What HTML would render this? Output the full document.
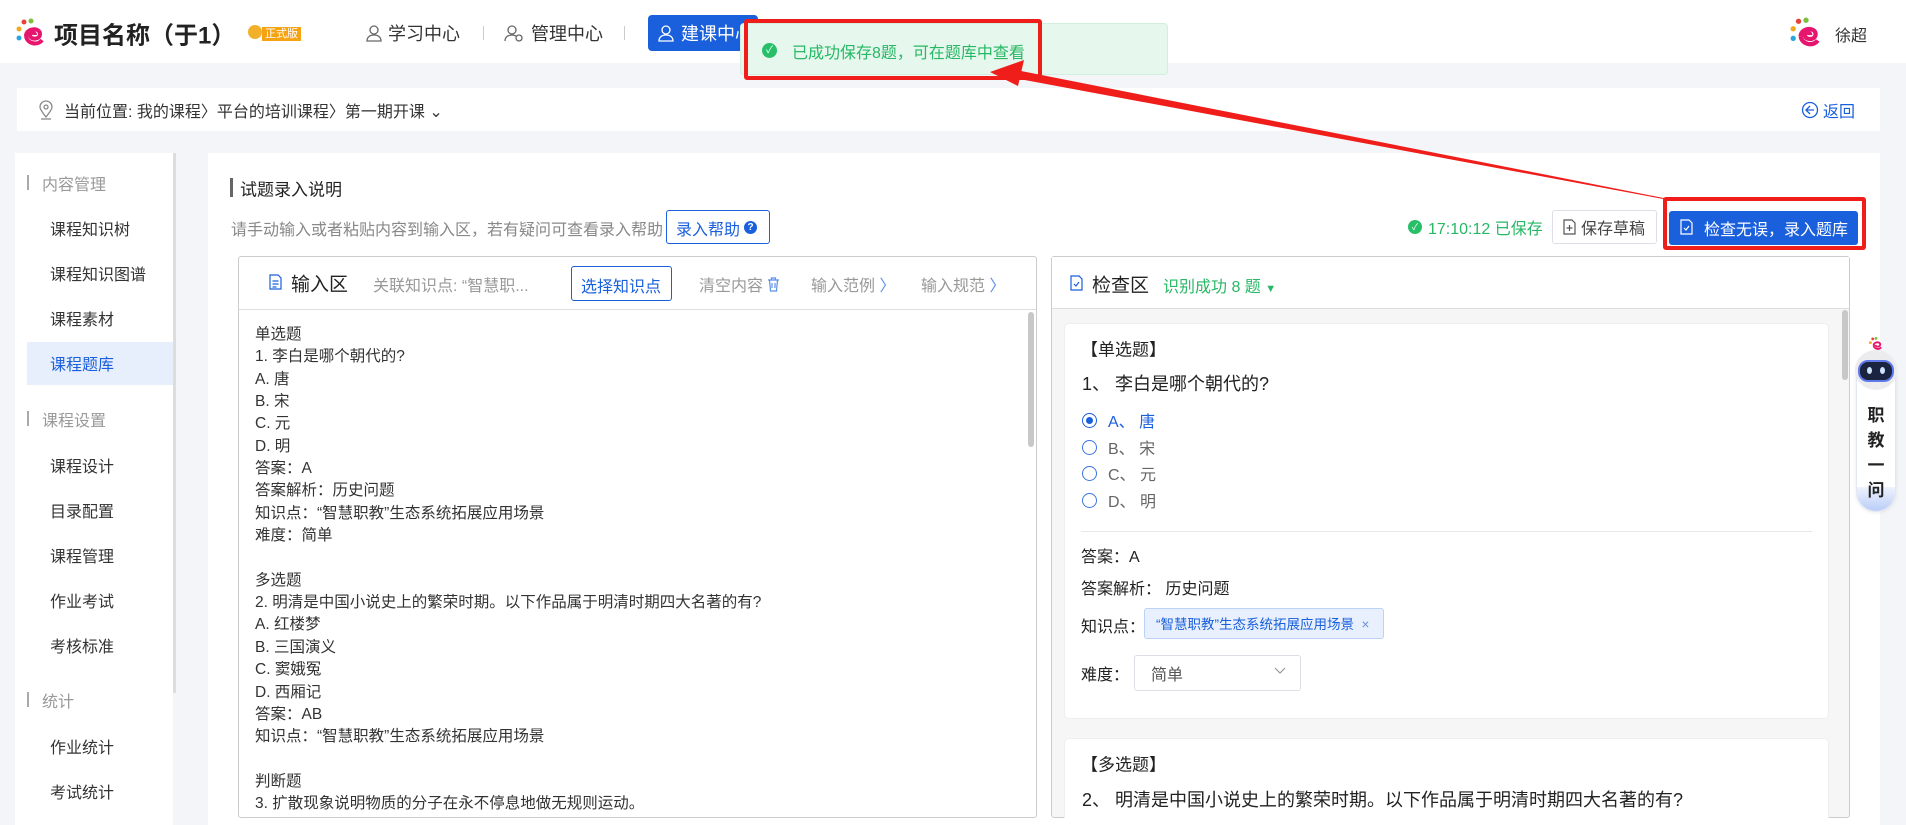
<!DOCTYPE html>
<html><head><meta charset="utf-8"><style>
*{margin:0;padding:0;box-sizing:border-box}
body{width:1906px;height:825px;overflow:hidden;background:#f4f5f8;font-family:"Liberation Sans","Noto Sans CJK SC",sans-serif;color:#333;position:relative}
.a{position:absolute;white-space:nowrap}
.vc{transform:translateY(-50%)}
</style></head><body>
<!-- header -->
<div class="a" style="left:0;top:0;width:1906px;height:63px;background:#fff"></div>
<svg class="a" style="left:16px;top:18px" width="30" height="30" viewBox="0 0 30 30"><circle cx="8" cy="4" r="2.5" fill="#e8413b"/><circle cx="15" cy="3" r="2.5" fill="#7bbf3a"/><circle cx="3" cy="11" r="2.5" fill="#f2a81e"/><circle cx="3" cy="20" r="2.5" fill="#2aa7df"/><path d="M10 18 C10 10 24 9 24 16 C24 22 14 22 14 17 C14 14 19 14 19 17" fill="none" stroke="#e6156d" stroke-width="4"/><path d="M10 18 C11 26 22 28 26 22" fill="none" stroke="#e6156d" stroke-width="4"/></svg>
<div class="a vc" style="left:54px;top:33px;font-size:24px;font-weight:bold;color:#222">项目名称（于1）</div>
<div class="a" style="left:248px;top:25px;width:14px;height:14px;border-radius:50%;background:#f3b12b"></div>
<div class="a" style="left:262px;top:27px;height:14px;padding:0 3px;background:#f6a313;color:#fff;font-size:11px;line-height:14px">正式版</div>
<svg class="a" style="left:365px;top:24px" width="18" height="18" viewBox="0 0 18 18" fill="none" stroke="#666" stroke-width="1.3"><circle cx="9" cy="6" r="4"/><path d="M2 17c0-4 3-6 7-6s7 2 7 6z"/></svg>
<div class="a vc" style="left:388px;top:33px;font-size:18px;color:#333">学习中心</div>
<div class="a" style="left:483px;top:26px;width:1px;height:14px;background:#ccc"></div>
<svg class="a" style="left:504px;top:24px" width="20" height="18" viewBox="0 0 20 18" fill="none" stroke="#666" stroke-width="1.3"><circle cx="8" cy="6" r="4"/><path d="M1 17c0-4 3-6 7-6 2 0 3 .5 4 1"/><circle cx="15" cy="14" r="3"/></svg>
<div class="a vc" style="left:531px;top:33px;font-size:18px;color:#333">管理中心</div>
<div class="a" style="left:624px;top:26px;width:1px;height:14px;background:#ccc"></div>
<div class="a" style="left:648px;top:15px;width:110px;height:36px;background:#1a5fdc;border-radius:4px"></div>
<svg class="a" style="left:658px;top:24px" width="18" height="18" viewBox="0 0 18 18" fill="none" stroke="#fff" stroke-width="1.3"><circle cx="8" cy="6" r="4"/><path d="M1 17c0-4 3-6 7-6s7 2 7 6z"/></svg>
<div class="a vc" style="left:681px;top:33px;font-size:18px;color:#fff">建课中心</div>
<!-- toast -->
<div class="a" style="left:740px;top:23px;width:428px;height:52px;background:#e6f7ed;border:1px solid #d2efdd;border-radius:4px"></div>
<div class="a" style="left:762px;top:43px;width:15px;height:15px;border-radius:50%;background:#27c069;color:#fff;font-size:10px;line-height:15px;text-align:center">✓</div>
<div class="a vc" style="left:792px;top:51px;font-size:16px;color:#27b865">已成功保存8题，可在题库中查看</div>
<div class="a" style="left:744px;top:19px;width:298px;height:61px;border:4px solid #f01e1a;border-radius:3px"></div>
<!-- user -->
<svg class="a" style="left:1790px;top:17px" width="32" height="32" viewBox="0 0 30 30"><circle cx="8" cy="4" r="2.5" fill="#e8413b"/><circle cx="15" cy="3" r="2.5" fill="#7bbf3a"/><circle cx="3" cy="11" r="2.5" fill="#f2a81e"/><circle cx="3" cy="20" r="2.5" fill="#2aa7df"/><path d="M10 18 C10 10 24 9 24 16 C24 22 14 22 14 17 C14 14 19 14 19 17" fill="none" stroke="#e6156d" stroke-width="4"/><path d="M10 18 C11 26 22 28 26 22" fill="none" stroke="#e6156d" stroke-width="4"/></svg>
<div class="a vc" style="left:1835px;top:34px;font-size:16px;color:#333">徐超</div>
<!-- breadcrumb -->
<div class="a" style="left:17px;top:88px;width:1863px;height:43px;background:#fff"></div>
<svg class="a" style="left:38px;top:100px" width="16" height="20" viewBox="0 0 16 20" fill="none" stroke="#888" stroke-width="1.3"><path d="M8 17C4 12 2 9 2 7a6 6 0 0 1 12 0c0 2-2 5-6 10z"/><circle cx="8" cy="7" r="2"/><path d="M3 19h10"/></svg>
<div class="a vc" style="left:64px;top:110px;font-size:16px;color:#333">当前位置:&nbsp;我的课程〉平台的培训课程〉第一期开课 ⌄</div>
<svg class="a" style="left:1801px;top:101px" width="18" height="18" viewBox="0 0 18 18" fill="none" stroke="#1a5fdc" stroke-width="1.3"><circle cx="9" cy="9" r="7.5"/><path d="M9 5 5 9l4 4M5 9h8"/></svg>
<div class="a vc" style="left:1823px;top:110px;font-size:16px;color:#1a5fdc">返回</div>
<!-- sidebar -->
<div class="a" style="left:15px;top:153px;width:158px;height:672px;background:#fff"></div>
<div class="a" style="left:173px;top:153px;width:3px;height:540px;background:#ddd"></div>
<div class="a" style="left:27px;top:175px;width:2px;height:15px;background:#aaa"></div>
<div class="a vc" style="left:42px;top:183px;font-size:16px;color:#999">内容管理</div>
<div class="a vc" style="left:50px;top:228px;font-size:16px">课程知识树</div>
<div class="a vc" style="left:50px;top:273px;font-size:16px">课程知识图谱</div>
<div class="a vc" style="left:50px;top:318px;font-size:16px">课程素材</div>
<div class="a" style="left:27px;top:342px;width:146px;height:43px;background:#e8effc"></div>
<div class="a vc" style="left:50px;top:363px;font-size:16px;color:#1a5fdc">课程题库</div>
<div class="a" style="left:27px;top:411px;width:2px;height:15px;background:#aaa"></div>
<div class="a vc" style="left:42px;top:419px;font-size:16px;color:#999">课程设置</div>
<div class="a vc" style="left:50px;top:465px;font-size:16px">课程设计</div>
<div class="a vc" style="left:50px;top:510px;font-size:16px">目录配置</div>
<div class="a vc" style="left:50px;top:555px;font-size:16px">课程管理</div>
<div class="a vc" style="left:50px;top:600px;font-size:16px">作业考试</div>
<div class="a vc" style="left:50px;top:645px;font-size:16px">考核标准</div>
<div class="a" style="left:27px;top:692px;width:2px;height:15px;background:#aaa"></div>
<div class="a vc" style="left:42px;top:700px;font-size:16px;color:#999">统计</div>
<div class="a vc" style="left:50px;top:746px;font-size:16px">作业统计</div>
<div class="a vc" style="left:50px;top:791px;font-size:16px">考试统计</div>
<!-- main card -->
<div class="a" style="left:208px;top:153px;width:1672px;height:672px;background:#fff"></div>
<div class="a" style="left:230px;top:178px;width:3px;height:19px;background:#666"></div>
<div class="a vc" style="left:240px;top:188px;font-size:17px;color:#222">试题录入说明</div>
<div class="a vc" style="left:231px;top:228px;font-size:16px;color:#888">请手动输入或者粘贴内容到输入区，若有疑问可查看录入帮助</div>
<div class="a" style="left:666px;top:210px;width:104px;height:34px;border:1px solid #1a5fdc;border-radius:3px"></div>
<div class="a vc" style="left:676px;top:228px;font-size:16px;color:#1a5fdc">录入帮助</div>
<div class="a" style="left:744px;top:221px;width:13px;height:13px;border-radius:50%;background:#1a5fdc;color:#fff;font-size:10px;line-height:13px;text-align:center;font-weight:bold">?</div>
<div class="a" style="left:1408px;top:220px;width:14px;height:14px;border-radius:50%;background:#27c069;color:#fff;font-size:9px;line-height:14px;text-align:center">✓</div>
<div class="a vc" style="left:1428px;top:227px;font-size:16px;color:#27b865">17:10:12 已保存</div>
<div class="a" style="left:1552px;top:210px;width:105px;height:34px;border:1px solid #dcdfe6;border-radius:3px"></div>
<svg class="a" style="left:1563px;top:219px" width="13" height="16" viewBox="0 0 13 16" fill="none" stroke="#555" stroke-width="1.2"><path d="M1 1h8l3 3v11H1z"/><path d="M6.5 6v6M3.5 9h6"/></svg>
<div class="a vc" style="left:1581px;top:227px;font-size:16px;color:#444">保存草稿</div>
<div class="a" style="left:1669px;top:211px;width:189px;height:34px;background:#1a5fdc;border-radius:3px"></div>
<svg class="a" style="left:1680px;top:219px" width="13" height="16" viewBox="0 0 13 16" fill="none" stroke="#fff" stroke-width="1.2"><path d="M1 1h8l3 3v11H1z"/><path d="M4 9l2 2 3-4"/></svg>
<div class="a vc" style="left:1704px;top:228px;font-size:16px;color:#fff">检查无误，录入题库</div>
<div class="a" style="left:1663px;top:197px;width:203px;height:53px;border:4px solid #f01e1a;border-radius:3px"></div>
<!-- arrow -->
<svg class="a" style="left:0;top:0" width="1906" height="825"><polygon points="1666,199.5 1666,198.5 1016,70 1014,78" fill="#f01e1a"/><polygon points="990,72 1024,60 1018,86" fill="#f01e1a"/></svg>
<!-- left panel -->
<div class="a" style="left:238px;top:256px;width:799px;height:562px;border:1px solid #ccc;border-radius:3px"></div>
<div class="a" style="left:239px;top:309px;width:797px;height:1px;background:#ddd"></div>
<svg class="a" style="left:269px;top:274px" width="13" height="16" viewBox="0 0 13 16" fill="none" stroke="#1a5fdc" stroke-width="1.2"><path d="M1 1h8l3 3v11H1z"/><path d="M3.5 7h6M3.5 10h6M3.5 13h4"/></svg>
<div class="a vc" style="left:291px;top:283px;font-size:19px;color:#222">输入区</div>
<div class="a vc" style="left:373px;top:284px;font-size:16px;color:#999">关联知识点: “智慧职...</div>
<div class="a" style="left:571px;top:266px;width:101px;height:35px;border:1px solid #1a5fdc;border-radius:3px"></div>
<div class="a vc" style="left:581px;top:285px;font-size:16px;color:#1a5fdc">选择知识点</div>
<div class="a vc" style="left:699px;top:284px;font-size:16px;color:#999">清空内容</div>
<svg class="a" style="left:767px;top:277px" width="13" height="15" viewBox="0 0 13 15" fill="none" stroke="#5b8ee6" stroke-width="1.2"><path d="M1 3h11M4.5 3V1h4v2M2.5 3l1 11h6l1-11M5 6v5M8 6v5"/></svg>
<div class="a vc" style="left:811px;top:284px;font-size:16px;color:#999">输入范例 <span style="color:#5b8ee6">〉</span></div>
<div class="a vc" style="left:921px;top:284px;font-size:16px;color:#999">输入规范 <span style="color:#5b8ee6">〉</span></div>
<div class="a" style="left:1028px;top:312px;width:6px;height:135px;background:#c8c8c8;border-radius:3px"></div>
<div class="a" style="left:255px;top:324px;font-size:15.5px;line-height:22.35px;color:#333">单选题<br>1. 李白是哪个朝代的?<br>A. 唐<br>B. 宋<br>C. 元<br>D. 明<br>答案：A<br>答案解析：历史问题<br>知识点：“智慧职教”生态系统拓展应用场景<br>难度：简单<br>&nbsp;<br>多选题<br>2. 明清是中国小说史上的繁荣时期。以下作品属于明清时期四大名著的有?<br>A. 红楼梦<br>B. 三国演义<br>C. 窦娥冤<br>D. 西厢记<br>答案：AB<br>知识点：“智慧职教”生态系统拓展应用场景<br>&nbsp;<br>判断题<br>3. 扩散现象说明物质的分子在永不停息地做无规则运动。</div>
<!-- right panel -->
<div class="a" style="left:1051px;top:256px;width:799px;height:562px;border:1px solid #ccc;border-radius:3px;background:#f6f6f6"></div>
<div class="a" style="left:1052px;top:257px;width:797px;height:52px;background:#fff;border-bottom:1px solid #ddd"></div>
<svg class="a" style="left:1070px;top:275px" width="13" height="16" viewBox="0 0 13 16" fill="none" stroke="#1a5fdc" stroke-width="1.2"><path d="M1 1h8l3 3v11H1z"/><path d="M4 9l2 2 3-4"/></svg>
<div class="a vc" style="left:1092px;top:284px;font-size:19px;color:#222">检查区</div>
<div class="a vc" style="left:1163px;top:285px;font-size:16px;color:#27b865">识别成功 8 题 <span style="font-size:11px">▼</span></div>
<div class="a" style="left:1842px;top:310px;width:6px;height:70px;background:#c8c8c8;border-radius:3px"></div>
<div class="a" style="left:1064px;top:323px;width:765px;height:396px;background:#fff;border-radius:5px;border:1px solid #eee"></div>
<div class="a vc" style="left:1081px;top:348px;font-size:17px;color:#222">【单选题】</div>
<div class="a vc" style="left:1082px;top:383px;font-size:18px;color:#222">1、 李白是哪个朝代的?</div>
<div class="a" style="left:1082px;top:413px;width:15px;height:15px;border-radius:50%;border:1.5px solid #1a5fdc"></div>
<div class="a" style="left:1086px;top:417px;width:7px;height:7px;border-radius:50%;background:#1a5fdc"></div>
<div class="a vc" style="left:1108px;top:420px;font-size:16px;color:#1a5fdc">A、 唐</div>
<div class="a" style="left:1082px;top:440px;width:15px;height:15px;border-radius:50%;border:1.5px solid #3d74e0"></div>
<div class="a vc" style="left:1108px;top:447px;font-size:16px;color:#666">B、 宋</div>
<div class="a" style="left:1082px;top:466px;width:15px;height:15px;border-radius:50%;border:1.5px solid #3d74e0"></div>
<div class="a vc" style="left:1108px;top:473px;font-size:16px;color:#666">C、 元</div>
<div class="a" style="left:1082px;top:493px;width:15px;height:15px;border-radius:50%;border:1.5px solid #3d74e0"></div>
<div class="a vc" style="left:1108px;top:500px;font-size:16px;color:#666">D、 明</div>
<div class="a" style="left:1081px;top:531px;width:731px;height:1px;background:#e8e8e8"></div>
<div class="a vc" style="left:1081px;top:555px;font-size:16px;color:#222">答案：A</div>
<div class="a vc" style="left:1081px;top:587px;font-size:16px;color:#222">答案解析：&nbsp;历史问题</div>
<div class="a vc" style="left:1081px;top:625px;font-size:16px;color:#222">知识点：</div>
<div class="a" style="left:1144px;top:608px;width:240px;height:31px;background:#e8f0fd;border:1px solid #bcd2f6;border-radius:3px"></div>
<div class="a vc" style="left:1156px;top:623px;font-size:13.5px;color:#1a5fdc">“智慧职教”生态系统拓展应用场景 &nbsp;<span style="color:#6b8fd6">×</span></div>
<div class="a vc" style="left:1081px;top:673px;font-size:16px;color:#222">难度：</div>
<div class="a" style="left:1134px;top:655px;width:167px;height:36px;border:1px solid #dcdfe6;border-radius:3px"></div>
<div class="a vc" style="left:1151px;top:673px;font-size:16px;color:#555">简单</div>
<svg class="a" style="left:1274px;top:667px" width="12" height="8" viewBox="0 0 12 8" fill="none" stroke="#999" stroke-width="1.2"><path d="M1 1l5 5 5-5"/></svg>
<div class="a" style="left:1064px;top:738px;width:765px;height:80px;background:#fff;border-radius:5px 5px 0 0;border:1px solid #eee;border-bottom:none"></div>
<div class="a vc" style="left:1081px;top:763px;font-size:17px;color:#222">【多选题】</div>
<div class="a vc" style="left:1082px;top:799px;font-size:18px;color:#222">2、 明清是中国小说史上的繁荣时期。以下作品属于明清时期四大名著的有?</div>
<!-- side widget -->
<div class="a" style="left:1880px;top:153px;width:26px;height:672px;background:#f4f5f8"></div>
<svg class="a" style="left:1869px;top:337px" width="14" height="14" viewBox="0 0 30 30"><circle cx="8" cy="4" r="3" fill="#e8413b"/><circle cx="15" cy="3" r="3" fill="#7bbf3a"/><circle cx="3" cy="12" r="3" fill="#f2a81e"/><path d="M10 18 C10 10 24 9 24 16 C24 22 14 22 14 17" fill="none" stroke="#e6156d" stroke-width="4"/><path d="M10 18 C11 26 22 28 26 22" fill="none" stroke="#e6156d" stroke-width="4"/></svg>
<div class="a" style="left:1856px;top:352px;width:40px;height:160px;border-radius:20px;background:#fff;border:1px solid #e3e6f3;box-shadow:0 1px 4px rgba(0,0,0,.08);overflow:hidden"><div style="position:absolute;left:0;bottom:0;width:40px;height:24px;background:linear-gradient(#eef3fd,#b9cdf7)"></div></div>
<div class="a" style="left:1855px;top:350px;width:42px;height:40px;border-radius:50%;background:#ececee"></div>
<div class="a" style="left:1858px;top:360px;width:36px;height:22px;border-radius:10px;background:#1a2340;border:2px solid #5f7ae8"></div>
<div class="a" style="left:1867px;top:367px;width:5px;height:7px;border-radius:50%;background:#cfe4ff"></div>
<div class="a" style="left:1880px;top:367px;width:5px;height:7px;border-radius:50%;background:#cfe4ff"></div>
<div class="a" style="left:1866px;top:403px;font-size:17px;font-weight:bold;line-height:25px;color:#222;width:20px;text-align:center;white-space:normal">职<br>教<br>一<br>问</div>
</body></html>
